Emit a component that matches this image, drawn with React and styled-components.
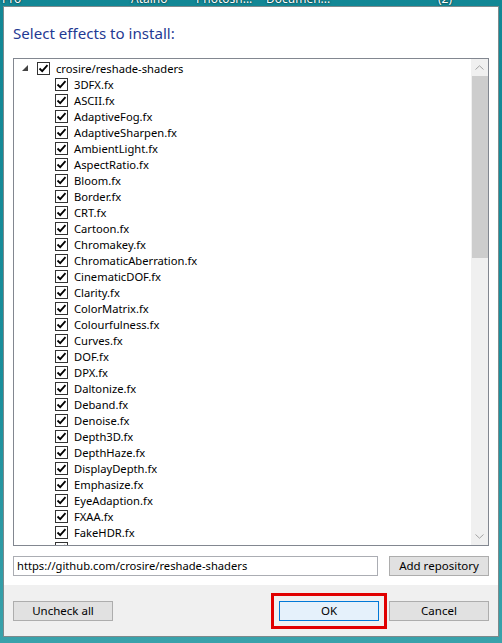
import React from "react";
import styled, { createGlobalStyle } from "styled-components";

const Global = createGlobalStyle`
  html, body { margin: 0; padding: 0; }
  body { font-family: "Noto Sans", "Open Sans", sans-serif; }
`;

const Desktop = styled.div`
  width: 502px;
  height: 643px;
  overflow: hidden;
  background: linear-gradient(180deg, #128795 0%, #1a8f9c 60%, #3aa2ab 100%);
  display: flex;
  flex-direction: column;
`;

const IconLabels = styled.div`
  height: 6px;
  overflow: hidden;
  position: relative;
  flex-shrink: 0;
`;

const IconLabel = styled.span`
  position: absolute;
  left: ${p => p.x}px;
  top: -7px;
  font-size: 12px;
  line-height: 12px;
  color: #fff;
  text-shadow: 0 0 2px #000;
  white-space: nowrap;
`;

const Dialog = styled.div`
  margin-left: 3px;
  width: 496px;
  height: 631px;
  box-sizing: border-box;
  border: 1px solid #7d8a8c;
  background: #f0f0f0;
  display: flex;
  flex-direction: column;
`;

const Main = styled.div`
  background: #fff;
  padding: 14px 9px 9px 9px;
  display: flex;
  flex-direction: column;
`;

const Title = styled.h1`
  margin: 0 0 13px 0;
  font-weight: 400;
  font-size: 15.1px;
  line-height: 24px;
  color: #1f3a93;
`;

const TreeBox = styled.div`
  height: 488px;
  box-sizing: border-box;
  border: 1px solid #828790;
  display: flex;
  background: #fff;
`;

const TreeList = styled.div`
  flex: 1;
  overflow: hidden;
  padding-top: 1px;
`;

const Row = styled.div`
  height: 16px;
  display: flex;
  align-items: center;
  padding-left: ${p => p.indent}px;
  font-size: 11.2px;
  color: #000;
  white-space: nowrap;
`;

const Expander = styled.svg`
  width: 6px;
  height: 6px;
  margin-right: 9px;
  margin-top: -1px;
`;

const Box = styled.span`
  width: 13px;
  height: 13px;
  box-sizing: border-box;
  border: 1px solid #333;
  background: #fff;
  display: flex;
  align-items: center;
  justify-content: center;
  margin-right: 6px;
  flex-shrink: 0;
`;

const Scrollbar = styled.div`
  width: 17px;
  background: #f0f0f0;
  display: flex;
  flex-direction: column;
`;

const ArrowButton = styled.div`
  height: 17px;
  display: flex;
  align-items: center;
  justify-content: center;
  flex-shrink: 0;
`;

const Thumb = styled.div`
  margin: 0 0 0 1px;
  height: 182px;
  background: #cdcdcd;
`;

const Track = styled.div`
  flex: 1;
`;

const RepoRow = styled.div`
  margin-top: 10px;
  display: flex;
  align-items: center;
  gap: 11px;
`;

const UrlInput = styled.div`
  flex: 1;
  height: 20px;
  box-sizing: border-box;
  border: 1px solid #abadb3;
  font-size: 11.2px;
  line-height: 18px;
  padding-left: 3px;
  color: #000;
  white-space: nowrap;
  overflow: hidden;
`;

const Button = styled.div`
  width: 100px;
  height: 20px;
  box-sizing: border-box;
  border: 1px solid ${p => (p.focused ? "#0078d7" : "#adadad")};
  background: ${p => (p.focused ? "#e5f1fb" : "#e1e1e1")};
  font-size: 11.5px;
  line-height: 18px;
  text-align: center;
  color: #000;
  flex-shrink: 0;
`;

const Footer = styled.div`
  flex: 1;
  padding: 16px 9px 0 9px;
  display: flex;
  align-items: flex-start;
`;

const Spacer = styled.div`
  flex: 1;
`;

const Highlight = styled.div`
  border: 3px solid #e00000;
  padding: 5px 5px;
  margin: -8px 2px 0 0;
`;

const Check = () => (
  <svg width="11" height="11" viewBox="0 0 11 11">
    <path d="M1.5 5.5 L4.2 8.2 L9.5 2.2" fill="none" stroke="#000" strokeWidth="1.8" />
  </svg>
);

const files = [
  "3DFX.fx", "ASCII.fx", "AdaptiveFog.fx", "AdaptiveSharpen.fx", "AmbientLight.fx",
  "AspectRatio.fx", "Bloom.fx", "Border.fx", "CRT.fx", "Cartoon.fx", "Chromakey.fx",
  "ChromaticAberration.fx", "CinematicDOF.fx", "Clarity.fx", "ColorMatrix.fx",
  "Colourfulness.fx", "Curves.fx", "DOF.fx", "DPX.fx", "Daltonize.fx", "Deband.fx",
  "Denoise.fx", "Depth3D.fx", "DepthHaze.fx", "DisplayDepth.fx", "Emphasize.fx",
  "EyeAdaption.fx", "FXAA.fx", "FakeHDR.fx", "FilmGrain.fx",
];

const labels = [
  { x: 2, text: "Pro" },
  { x: 131, text: "Atalho" },
  { x: 196, text: "Photosh..." },
  { x: 266, text: "Documen..." },
  { x: 438, text: "(2)" },
];

export default function App() {
  return (
    <Desktop>
      <Global />
      <IconLabels>
        {labels.map(l => (
          <IconLabel key={l.text} x={l.x}>{l.text}</IconLabel>
        ))}
      </IconLabels>
      <Dialog>
        <Main>
          <Title>Select effects to install:</Title>
          <TreeBox>
            <TreeList>
              <Row indent={8}>
                <Expander viewBox="0 0 6 6">
                  <polygon points="6,0 6,6 0,6" fill="#444" />
                </Expander>
                <Box><Check /></Box>
                crosire/reshade-shaders
              </Row>
              {files.map(f => (
                <Row key={f} indent={41}>
                  <Box><Check /></Box>
                  {f}
                </Row>
              ))}
            </TreeList>
            <Scrollbar>
              <ArrowButton>
                <svg width="9" height="5" viewBox="0 0 9 5">
                  <path d="M0.5 4.5 L4.5 0.8 L8.5 4.5" fill="none" stroke="#a3a3a3" strokeWidth="1" />
                </svg>
              </ArrowButton>
              <Thumb />
              <Track />
              <ArrowButton>
                <svg width="9" height="5" viewBox="0 0 9 5">
                  <path d="M0.5 0.5 L4.5 4.2 L8.5 0.5" fill="none" stroke="#a3a3a3" strokeWidth="1" />
                </svg>
              </ArrowButton>
            </Scrollbar>
          </TreeBox>
          <RepoRow>
            <UrlInput>https://github.com/crosire/reshade-shaders</UrlInput>
            <Button>Add repository</Button>
          </RepoRow>
        </Main>
        <Footer>
          <Button>Uncheck all</Button>
          <Spacer />
          <Highlight>
            <Button focused>OK</Button>
          </Highlight>
          <Button>Cancel</Button>
        </Footer>
      </Dialog>
    </Desktop>
  );
}
